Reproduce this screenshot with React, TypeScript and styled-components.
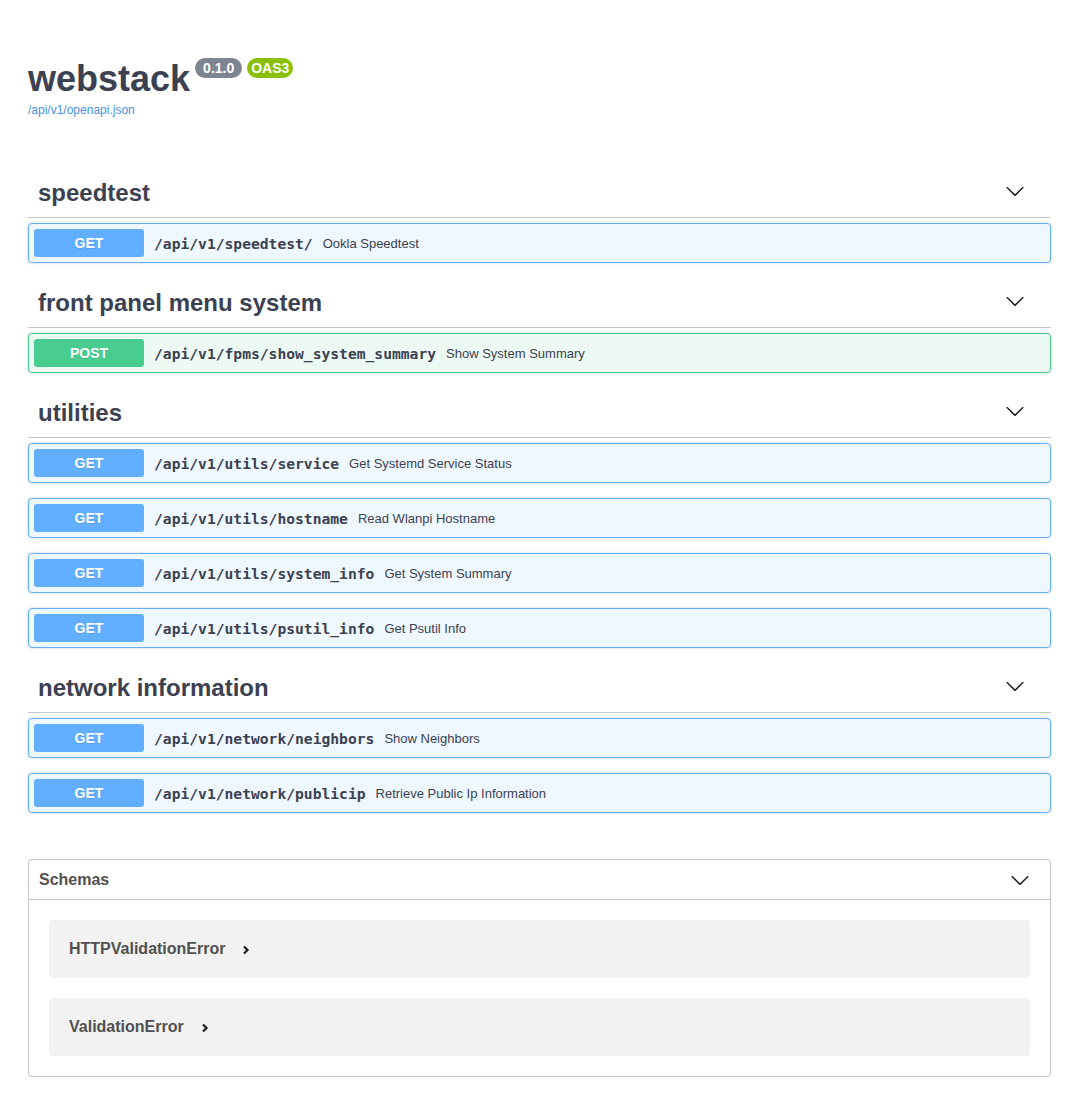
import React from "react";
import styled, { createGlobalStyle } from "styled-components";

const Global = createGlobalStyle`
  body {
    margin: 8px;
    background: #fff;
    font-family: "Liberation Sans", Arial, sans-serif;
    color: #3b4151;
  }
  * { box-sizing: border-box; }
`;

const Wrapper = styled.div`
  padding: 0 20px;
`;

const Info = styled.div`
  margin: 50px 0 51px;
`;

const Title = styled.h2`
  display: flex;
  align-items: flex-start;
  gap: 5px;
  margin: 0;
  font-size: 36px;
  line-height: 41px;
  font-weight: 700;
  color: #3b4151;
`;

const Badge = styled.span<{ $bg: string; $px: number }>`
  display: inline-block;
  padding: 2px ${(p) => p.$px}px;
  border-radius: 57px;
  background: ${(p) => p.$bg};
  color: #fff;
  font-size: 14px;
  line-height: 16px;
  font-weight: 700;
`;

const SpecLink = styled.a`
  display: block;
  margin-top: 4px;
  font-size: 12px;
  line-height: 14px;
  color: #4990e2;
  text-decoration: none;
`;

const Sections = styled.div`
  display: flex;
  flex-direction: column;
`;

const Tag = styled.h3`
  display: flex;
  align-items: center;
  height: 50px;
  margin: 0 0 5px;
  padding: 10px 26px 10px 10px;
  border-bottom: 1px solid rgba(59, 65, 81, 0.3);
  font-size: 24px;
  font-weight: 700;
  color: #3b4151;
`;

const TagName = styled.span`
  flex: 1;
`;

const Arrow = styled.svg<{ $mt?: number }>`
  width: 20px;
  height: 20px;
  fill: #1e1e1e;
  margin-top: ${(p) => p.$mt ?? 0}px;
`;

const Op = styled.div<{ $border: string; $bg: string }>`
  display: flex;
  align-items: center;
  height: 40px;
  margin: 0 0 15px;
  padding: 5px;
  border: 1px solid ${(p) => p.$border};
  border-radius: 4px;
  background: ${(p) => p.$bg};
  box-shadow: 0 0 3px rgba(0, 0, 0, 0.19);
`;

const Method = styled.span<{ $bg: string }>`
  width: 110px;
  height: 28px;
  display: flex;
  align-items: center;
  justify-content: center;
  border-radius: 3px;
  background: ${(p) => p.$bg};
  color: #fff;
  font-size: 14px;
  font-weight: 700;
  text-shadow: 0 1px 0 rgba(0, 0, 0, 0.1);
`;

const Path = styled.span`
  padding: 0 10px;
  font-family: "DejaVu Sans Mono", "Liberation Mono", monospace;
  font-size: 14.65px;
  font-weight: 700;
  color: #3b4151;
`;

const Desc = styled.span`
  font-size: 13px;
  color: #3b4151;
`;

const Models = styled.section`
  margin: 31px 0 30px;
  border: 1px solid rgba(59, 65, 81, 0.3);
  border-radius: 4px;
  padding-bottom: 20px;
`;

const ModelsHead = styled.h4`
  display: flex;
  align-items: center;
  height: 40px;
  margin: 0;
  padding: 10px 20px 10px 10px;
  border-bottom: 1px solid rgba(59, 65, 81, 0.3);
  font-size: 16px;
  font-weight: 700;
  color: #505050;
`;

const ModelList = styled.div`
  display: flex;
  flex-direction: column;
  gap: 20px;
  padding: 20px 20px 0;
`;

const ModelBox = styled.div`
  display: flex;
  align-items: center;
  gap: 17px;
  height: 58px;
  padding: 0 20px;
  border-radius: 4px;
  background: rgba(0, 0, 0, 0.05);
  font-size: 16px;
  font-weight: 700;
  color: #505050;
`;

const Chevron = styled.svg`
  width: 8px;
  height: 10px;
  margin-top: 2px;
`;

const ArrowDown = ({ mt }: { mt?: number }) => (
  <Arrow viewBox="0 0 20 20" $mt={mt}>
    <path d="M17.418 6.109c.272-.268.709-.268.979 0s.271.701 0 .969l-7.908 7.83c-.27.268-.707.268-.979 0l-7.908-7.830c-.27-.268-.27-.701 0-.969.271-.268.709-.268.979 0L10 13.25l7.418-7.141z" />
  </Arrow>
);

type OpT = { m: "GET" | "POST"; path: string; desc: string };
const sections: { name: string; ops: OpT[] }[] = [
  { name: "speedtest", ops: [{ m: "GET", path: "/api/v1/speedtest/", desc: "Ookla Speedtest" }] },
  {
    name: "front panel menu system",
    ops: [{ m: "POST", path: "/api/v1/fpms/show_system_summary", desc: "Show System Summary" }],
  },
  {
    name: "utilities",
    ops: [
      { m: "GET", path: "/api/v1/utils/service", desc: "Get Systemd Service Status" },
      { m: "GET", path: "/api/v1/utils/hostname", desc: "Read Wlanpi Hostname" },
      { m: "GET", path: "/api/v1/utils/system_info", desc: "Get System Summary" },
      { m: "GET", path: "/api/v1/utils/psutil_info", desc: "Get Psutil Info" },
    ],
  },
  {
    name: "network information",
    ops: [
      { m: "GET", path: "/api/v1/network/neighbors", desc: "Show Neighbors" },
      { m: "GET", path: "/api/v1/network/publicip", desc: "Retrieve Public Ip Information" },
    ],
  },
];

const colors = {
  GET: { main: "#61affe", bg: "#eff7ff" },
  POST: { main: "#49cc90", bg: "#edfaf4" },
};

export default function App() {
  return (
    <Wrapper>
      <Global />
      <Info>
        <Title>
          webstack
          <Badge $bg="#7d8492" $px={8}>0.1.0</Badge>
          <Badge $bg="#89bf04" $px={4}>OAS3</Badge>
        </Title>
        <SpecLink href="#">/api/v1/openapi.json</SpecLink>
      </Info>
      <Sections>
        {sections.map((s) => (
          <React.Fragment key={s.name}>
            <Tag>
              <TagName>{s.name}</TagName>
              <ArrowDown mt={-4} />
            </Tag>
            {s.ops.map((o) => (
              <Op key={o.path} $border={colors[o.m].main} $bg={colors[o.m].bg}>
                <Method $bg={colors[o.m].main}>{o.m}</Method>
                <Path>{o.path}</Path>
                <Desc>{o.desc}</Desc>
              </Op>
            ))}
          </React.Fragment>
        ))}
      </Sections>
      <Models>
        <ModelsHead>
          <TagName>Schemas</TagName>
          <ArrowDown />
        </ModelsHead>
        <ModelList>
          {["HTTPValidationError", "ValidationError"].map((n) => (
            <ModelBox key={n}>
              {n}
              <Chevron viewBox="0 0 8 10">
                <path d="M2 1.5 L5.5 5 L2 8.5" fill="none" stroke="#1e1e1e" strokeWidth="2.2" />
              </Chevron>
            </ModelBox>
          ))}
        </ModelList>
      </Models>
    </Wrapper>
  );
}
